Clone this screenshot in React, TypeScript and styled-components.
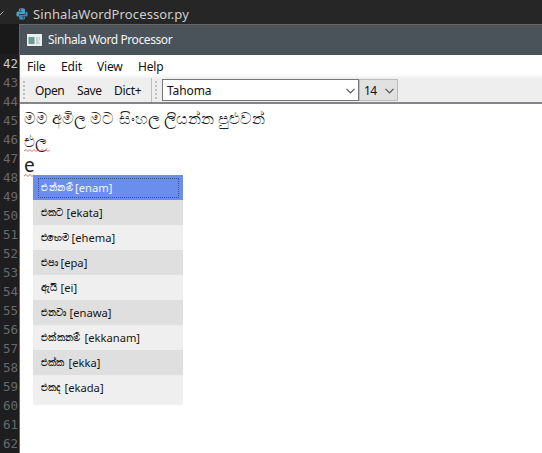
import React from "react";
import styled, { createGlobalStyle } from "styled-components";

const Global = createGlobalStyle`
  * { box-sizing: border-box; }
  body { margin: 0; overflow: hidden; background: #1e1e20; }
`;

const Screen = styled.div`
  width: 542px;
  height: 453px;
  display: flex;
  flex-direction: column;
  overflow: hidden;
  background: #1e1e20;
  font-family: "Noto Sans", "Open Sans", sans-serif;
  white-space: pre;
`;

const TabStrip = styled.div`
  flex: 0 0 24px;
  display: flex;
  align-items: center;
  background: #262626;
  color: #cfcfcf;
  padding-top: 4px;
`;

const CheckMark = styled.svg`
  width: 5px;
  height: 8px;
  flex: none;
`;

const PythonMark = styled.svg`
  width: 12px;
  height: 12px;
  margin: 0 5px 0 11px;
  flex: none;
`;

const FileName = styled.span`
  font-size: 13px;
  letter-spacing: 0.12px;
  line-height: 20px;
`;

const Body = styled.div`
  flex: 1;
  display: flex;
  min-height: 0;
`;

const Gutter = styled.div`
  flex: 0 0 19px;
  padding: 30px 1px 0 0;
  background: linear-gradient(#191919 0 30px, #1e1e20 30px);
  color: #68696b;
  font: 12.5px/19px "DejaVu Sans Mono", monospace;
  text-align: right;
  overflow: hidden;
`;

const LineNumber = styled.div<{ $active: boolean }>`
  height: 19px;
  color: ${(p) => (p.$active ? "#c8c8c8" : "inherit")};
`;

const Window = styled.div`
  flex: 1;
  display: flex;
  flex-direction: column;
  border-left: 1px solid #626569;
  background: #fff;
  color: #111;
`;

const TitleBar = styled.div`
  flex: 0 0 31px;
  display: flex;
  align-items: center;
  gap: 6px;
  padding-left: 7px;
  border-top: 1px solid #64686a;
  background: #4a525a;
  color: #f5f5f5;
`;

const AppIcon = styled.svg`
  width: 15px;
  height: 12px;
  flex: none;
`;

const Label = styled.span<{ $width: number; $spacing?: number }>`
  flex: 0 0 ${(p) => p.$width}px;
  font-size: 12px;
  line-height: 18px;
  letter-spacing: ${(p) => p.$spacing ?? 0}px;
`;

const MenuBar = styled.div`
  flex: 0 0 23px;
  display: flex;
  align-items: center;
  padding: 1px 0 0 7px;
  background: linear-gradient(#fff 19px, #f1f1f1);
`;

const ToolBar = styled.div`
  flex: 0 0 26px;
  display: flex;
  align-items: center;
  background: #eee;
  border-bottom: 2px solid #858489;
`;

const Grip = styled.div`
  flex: 0 0 2px;
  height: 19px;
  margin-left: 3px;
  background: repeating-linear-gradient(#bdbdbd 0 2px, transparent 2px 4px);
`;

const Separator = styled.div`
  width: 1px;
  height: 24px;
  background: #bcbcbc;
`;

const Actions = styled.div`
  display: flex;
  flex: 0 0 126px;
  padding: 1px 0 0 10px;
`;

const Selects = styled.div`
  display: flex;
  margin-left: 5px;
`;

const Select = styled.div<{ $width: number; $fill: string; $border: string }>`
  display: flex;
  align-items: center;
  justify-content: space-between;
  width: ${(p) => p.$width}px;
  height: 22px;
  padding: 1px 3px 0 4px;
  border: 1px solid ${(p) => p.$border};
  background: ${(p) => p.$fill};
`;

const Chevron = styled.svg`
  width: 9px;
  height: 6px;
  flex: none;
`;

const Document = styled.div`
  flex: 1;
  position: relative;
  padding: 3px 0 0 4px;
`;

const TextLine = styled.div<{ $height: number; $size: number }>`
  height: ${(p) => p.$height}px;
  line-height: ${(p) => p.$height}px;
  font-size: ${(p) => p.$size}px;
  color: #222;
`;

const Misspelled = styled.span`
  display: inline-block;
  height: 100%;
  vertical-align: top;
`;

const Squiggle = styled.svg<{ $lift: number }>`
  display: block;
  height: 3px;
  margin-top: -${(p) => p.$lift}px;
`;

const Popup = styled.div`
  position: absolute;
  left: 13px;
  top: 71px;
  width: 150px;
  height: 230px;
  background: #f0efef;
`;

const Suggestion = styled.div<{ $selected: boolean; $shaded: boolean }>`
  height: 25px;
  padding: 3px 4px 2px 5px;
  background: ${(p) => (p.$selected ? "#6b8eee" : p.$shaded ? "#e0dfdf" : "#f0efef")};
  color: ${(p) => (p.$selected ? "#f4f6ff" : "#151515")};
`;

const SuggestionText = styled.div<{ $selected: boolean }>`
  display: flex;
  align-items: center;
  height: 20px;
  padding-left: 2px;
  border: 1px dotted ${(p) => (p.$selected ? "#35508f" : "transparent")};
  font-size: 11.2px;
  line-height: 18px;
`;

const Sinhala = styled.span<{ $width: number; $spacing: number }>`
  flex: 0 0 ${(p) => p.$width}px;
  font-size: 9.7px;
  letter-spacing: ${(p) => p.$spacing}px;
  -webkit-text-stroke: 0.2px currentColor;
`;

const suggestions: [string, string, number, number][] = [
  ["එන්නම්", "[enam]", 34, 0.5],
  ["එකට", "[ekata]", 25.5, 0],
  ["එහෙම", "[ehema]", 30.5, -0.6],
  ["එපා", "[epa]", 19.5, -0.2],
  ["ඇයි", "[ei]", 19.5, -0.2],
  ["එනවා", "[enawa]", 28.5, 0],
  ["එක්කනම්", "[ekkanam]", 43.5, 0.3],
  ["එක්ක", "[ekka]", 27.5, 0.2],
  ["එකද", "[ekada]", 23.5, 0],
];

function Arrow() {
  return (
    <Chevron viewBox="0 0 9 6">
      <path d="M.5 .8 4.5 4.8 8.5 .8" fill="none" stroke="#555" strokeWidth="1.2" />
    </Chevron>
  );
}

function Wave({ width, lift }: { width: number; lift: number }) {
  let d = "M0 2";
  for (let x = 2; x <= width; x += 2) d += ` L${x} ${x % 4 ? 0.5 : 2.5}`;
  return (
    <Squiggle $lift={lift} width={width} height="3">
      <path d={d} fill="none" stroke="#c94a4a" strokeWidth=".8" />
    </Squiggle>
  );
}

export default function App() {
  return (
    <Screen>
      <Global />
      <TabStrip>
        <CheckMark viewBox="0 0 5 8">
          <path d="M0 5 3.5 1.5" stroke="#aaa" fill="none" />
        </CheckMark>
        <PythonMark viewBox="0 0 12 12">
          <path d="M3 3V1.5Q3 .3 6 .3T9 1.5V5Q9 6 8 6H4Q3 6 3 7v1.5H1.5Q.3 8.5.3 6T1.5 3.5H6V3Z" fill="#4b9dc2" />
          <path d="M9 9v1.5q0 1.2-3 1.2T3 10.500V8Q3 6.700 4 6.700H8Q9.500 6.700 9.500 5V3.500h1q1.200 0 1.200 2.500t-1.200 2.500H6V9Z" fill="#3c88ad" />
          <path d="M4 1.500h1v.9H4zM7 9.500h1v.9H7z" fill="#262626" />
        </PythonMark>
        <FileName>SinhalaWordProcessor.py</FileName>
      </TabStrip>
      <Body>
        <Gutter>
          {Array.from({ length: 21 }, (_, i) => (
            <LineNumber key={i} $active={i === 0}>{42 + i}</LineNumber>
          ))}
        </Gutter>
        <Window>
          <TitleBar>
            <AppIcon viewBox="0 0 15 12">
              <path d="M0 0h15v12H0z" fill="#e8f0f0" />
              <path d="M1.500 3h6v7h-6z" fill="#6d9997" />
              <path d="M9 3h4v7H9z" fill="#c5d1d3" />
              <path d="M10 3l3 4v3z" fill="#f4f7f7" />
            </AppIcon>
            <Label $width={140} $spacing={-0.4}>Sinhala Word Processor</Label>
          </TitleBar>
          <MenuBar>
            <Label $width={34} $spacing={-0.2}>File</Label>
            <Label $width={36} $spacing={-0.1}>Edit</Label>
            <Label $width={41} $spacing={-0.2}>View</Label>
            <Label $width={40} $spacing={-0.2}>Help</Label>
          </MenuBar>
          <ToolBar>
            <Grip />
            <Actions>
              <Label $width={42} $spacing={-0.4}>Open</Label>
              <Label $width={37} $spacing={-0.4}>Save</Label>
              <Label $width={36} $spacing={-0.3}>Dict+</Label>
            </Actions>
            <Separator />
            <Grip />
            <Selects>
              <Select $width={197} $fill="#fff" $border="#77777a">
                <Label $width={60} $spacing={-0.1}>Tahoma</Label>
                <Arrow />
              </Select>
              <Select $width={39} $fill="#e2e1e1" $border="#bcbbbb">
                <Label $width={16} $spacing={-0.5}>14</Label>
                <Arrow />
              </Select>
            </Selects>
          </ToolBar>
          <Document>
            <TextLine $height={23} $size={16.2}>මම අමිල මට සිංහල ලියන්න පුළුවන්</TextLine>
            <TextLine $height={22} $size={16.2}>
              <Misspelled>එල<Wave width={26} lift={3} /></Misspelled>
            </TextLine>
            <TextLine $height={26} $size={19}>
              <Misspelled>e<Wave width={10} lift={4} /></Misspelled>
            </TextLine>
            <Popup>
              {suggestions.map(([word, latin, width, spacing], i) => (
                <Suggestion key={latin} $selected={i === 0} $shaded={i % 2 === 1}>
                  <SuggestionText $selected={i === 0}>
                    <Sinhala $width={width} $spacing={spacing}>{word}</Sinhala>
                    <span>{latin}</span>
                  </SuggestionText>
                </Suggestion>
              ))}
            </Popup>
          </Document>
        </Window>
      </Body>
    </Screen>
  );
}
